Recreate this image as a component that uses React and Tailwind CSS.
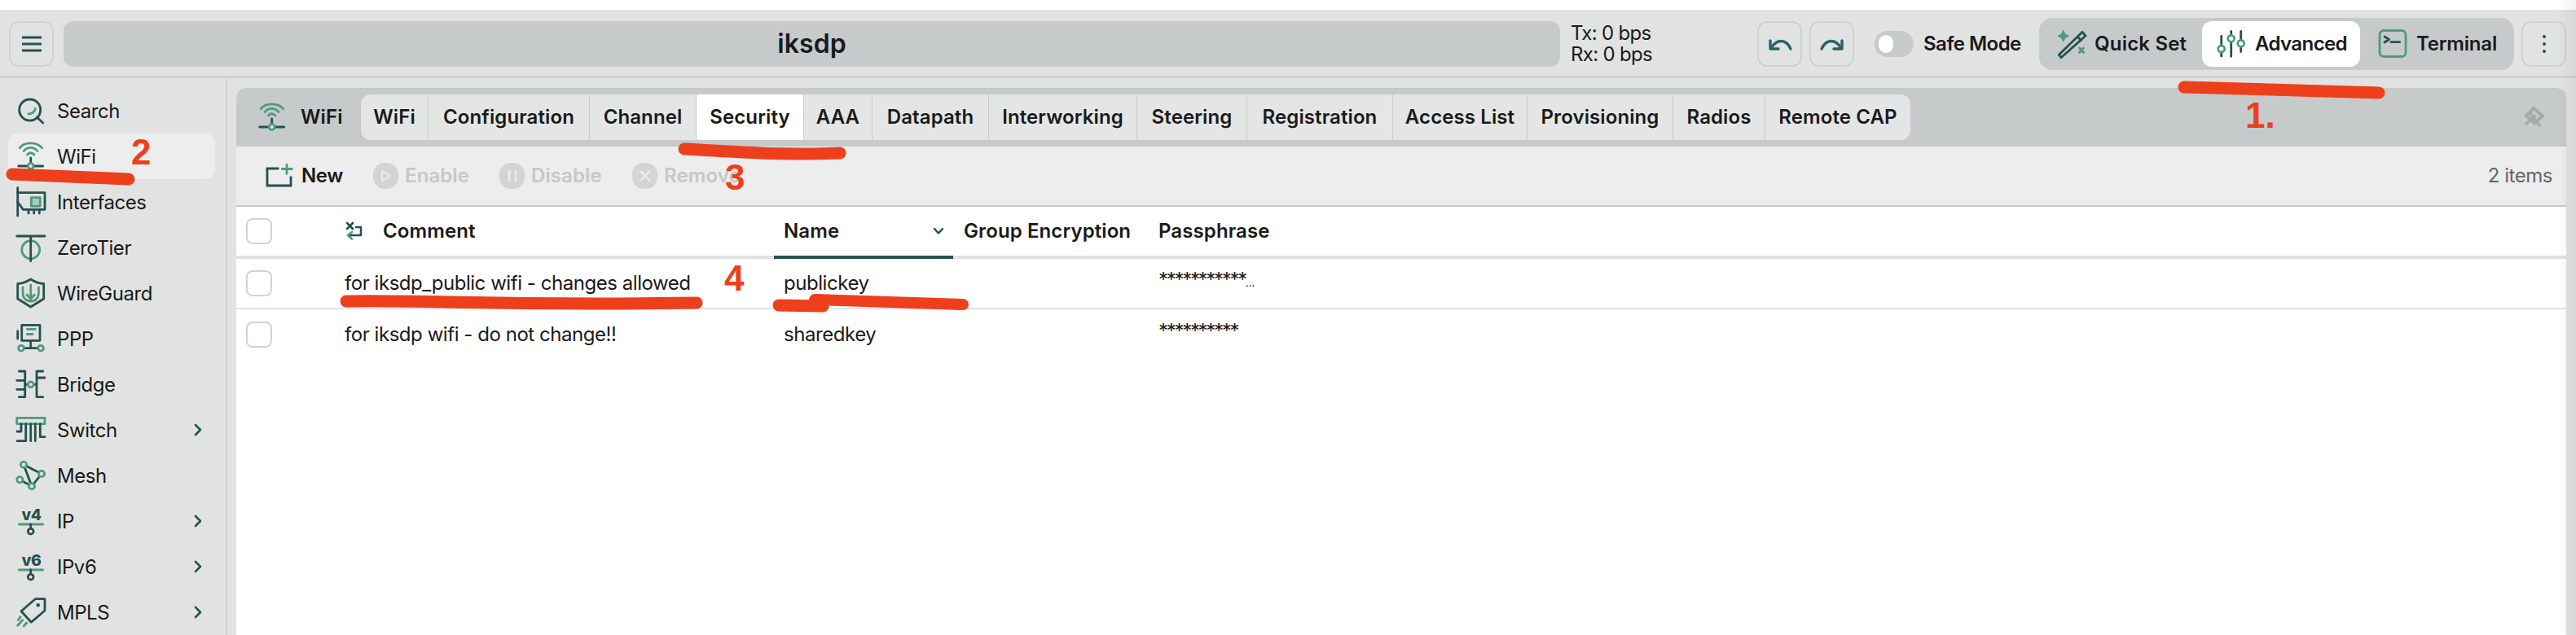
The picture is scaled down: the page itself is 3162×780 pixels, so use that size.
import React from "react";

const D = "#27504f";
const G = "#4f9a7e";

function Svg({ size = 40, w, h, children, className = "" }) {
  return (
    <svg width={w || size} height={h || size} viewBox={`0 0 ${w || size} ${h || size}`} fill="none" strokeWidth="2.8" strokeLinecap="round" strokeLinejoin="round" className={`shrink-0 ${className}`}>
      {children}
    </svg>
  );
}

const SearchI = () => (
  <Svg>
    <circle cx="18.7" cy="19" r="13" stroke={D} />
    <path d="M27.5 28 L34.7 35" stroke={D} />
    <path d="M17 24 C21 24 25 21 25.3 17.3" stroke={G} />
  </Svg>
);
const WifiI = () => (
  <Svg>
    <path d="M6.3 9.7 C12 2 27 2 33.7 9.7" stroke={G} />
    <path d="M11.3 13.5 C15 8 24 8 28 13.5" stroke={G} />
    <path d="M15.5 18 C17.5 15 21.5 15 24 18" stroke={G} />
    <path d="M19.7 22 V28.5" stroke={D} />
    <path d="M4.7 32 H34.7" stroke={D} />
    <circle cx="19.7" cy="32" r="3.4" fill="#e8eaea" stroke={G} />
  </Svg>
);
const InterfacesI = () => (
  <Svg>
    <path d="M3.7 2.7 V37" stroke={D} />
    <path d="M3.7 8.7 H37 V29.3 H10.3 L3.7 20" stroke={D} />
    <path d="M17 29.3 V34 M23.7 29.3 V34 M30.3 29.3 V34" stroke={D} />
    <rect x="20.3" y="14.7" width="11" height="10.6" stroke={G} fill="#a6cbbb" />
  </Svg>
);
const ZeroTierI = () => (
  <Svg>
    <circle cx="19.7" cy="22.7" r="11" stroke={G} />
    <path d="M2.7 6 H37 M19.7 6 V36.7" stroke={D} />
  </Svg>
);
const WireGuardI = () => (
  <Svg>
    <path d="M3.7 8.5 C8 8.5 13 7 19.7 3 C26 7 31 8.5 35.7 8.5 V27 L19.7 37 L3.7 27 Z" stroke={D} />
    <path d="M10 13 V20 C10 26 14 30 19.7 30 C25.4 30 29.4 26 29.4 20 V13" stroke={G} />
    <path d="M19.7 10 V29 M15 22 L19.7 27 L24.4 22" stroke={G} />
  </Svg>
);
const PPPI = () => (
  <Svg>
    <rect x="8.7" y="3.3" width="22.3" height="19" stroke={D} />
    <path d="M15.3 8.3 H25.3 M15.3 14.5 H22" stroke={G} />
    <path d="M3.7 10.7 V20" stroke={D} />
    <path d="M19.7 22.3 V31.7 M12 31.7 H27" stroke={D} />
    <circle cx="8" cy="31.7" r="3.4" stroke={G} />
    <circle cx="32" cy="31.7" r="3.4" stroke={G} />
  </Svg>
);
const BridgeI = () => (
  <Svg>
    <path d="M5.3 4 H12.7 V35.7 H5.3 M2.7 15.3 H12.7 M2.7 26.3 H12.7 M12.7 20.3 H16" stroke={D} />
    <path d="M34.7 4 H27 V35.7 H34.7 M27 12 H37 M23.5 20.3 H27" stroke={D} />
    <circle cx="19.7" cy="20.3" r="3.4" stroke={G} />
  </Svg>
);
const SwitchI = () => (
  <Svg>
    <rect x="2.7" y="5.3" width="34.3" height="7.4" stroke={G} />
    <path d="M3 22 H8 V12.7 M3 33.7 H13.7 V12.7 M19.7 12.7 V33.7 M25.3 12.7 V33.7 M31.3 12.7 V28.7 H37" stroke={D} />
  </Svg>
);
const MeshI = () => (
  <Svg>
    <path d="M11 6.7 L33 18 L21 33.3 Z M6.3 25.3 L21 33.3" stroke={D} />
    <circle cx="11" cy="6.7" r="3.6" fill="#e1e3e2" stroke={G} />
    <circle cx="33" cy="18" r="3.6" fill="#e1e3e2" stroke={G} />
    <circle cx="6.3" cy="25.3" r="3.6" fill="#e1e3e2" stroke={G} />
    <circle cx="21" cy="33.3" r="3.6" fill="#e1e3e2" stroke={G} />
  </Svg>
);
const IpI = ({ label }) => (
  <Svg>
    <text x="8.5" y="19" fill={D} fontFamily="Inter, sans-serif" fontWeight="800" fontSize="19" textLength="24" lengthAdjust="spacingAndGlyphs" stroke="none">{label}</text>
    <path d="M5.3 24 H34.7" stroke={G} />
    <path d="M19.7 24 V29" stroke={D} />
    <circle cx="19.7" cy="32.7" r="3.4" stroke={D} />
  </Svg>
);
const MplsI = () => (
  <Svg>
    <path d="M25.3 3.7 H37 V18 L20.3 32.3 L8 18.7 Z" stroke={D} />
    <circle cx="28.7" cy="11.3" r="2.2" fill={D} stroke="none" />
    <path d="M4.3 29.7 L7 25.7 M3.7 36.3 L9.7 29.7 M11.3 37 L14.7 33" stroke={G} />
  </Svg>
);
const QuickI = () => (
  <Svg>
    <path d="M3.3 33.3 L6 36.7 L36 10 L32 5.3 Z M26 11 L30.5 15.5" stroke={D} />
    <path d="M8.7 3.5 L11 8 L15.5 10 L11 12.5 L8.7 17 L6.3 12.5 L2 10 L6.3 8 Z" fill={G} stroke={G} strokeWidth="1" />
    <path d="M28.5 25 L33.5 30.5 M33.5 25 L28.5 30.5" stroke={G} />
  </Svg>
);
const AdvancedI = () => (
  <Svg>
    <path d="M8.7 10.5 V22 M8.7 30 V35 M20.7 4.5 V9.5 M20.7 17.5 V35.3 M32.7 4.5 V15.5 M32.7 23.5 V29.5" stroke={D} />
    <circle cx="8.7" cy="26" r="4" stroke={G} />
    <circle cx="20.7" cy="13.3" r="4" stroke={G} />
    <circle cx="32.7" cy="19.3" r="4" stroke={G} />
  </Svg>
);
const TerminalI = () => (
  <Svg>
    <rect x="4" y="3.5" width="32" height="32" rx="5" stroke={G} />
    <path d="M10 11 L15.5 14.5 L10 18 M18 17.7 H28.7" stroke={D} />
  </Svg>
);
const UndoI = ({ flip }) => (
  <svg width="40" height="40" viewBox="0 0 40 40" fill="none" stroke="#2b6065" strokeWidth="3.4" strokeLinecap="round" strokeLinejoin="round" className={flip ? "shrink-0 -scale-x-100" : "shrink-0"}>
    <path d="M8 16 V26 H18" />
    <path d="M9 25 C16 14 27 13 33 26" />
  </svg>
);
const NewI = () => (
  <svg width="36" height="30" viewBox="0 0 36 30" fill="none" stroke={D} strokeWidth="2.8" strokeLinecap="square" className="shrink-0">
    <path d="M15 6 H2 V27 H31 V17" />
    <path d="M26 1.5 V12 M20.5 6.5 H32" stroke={G} />
  </svg>
);
const CommentI = () => (
  <svg width="22" height="24" viewBox="0 0 22 24" fill="none" stroke={D} strokeWidth="2.6" strokeLinecap="round" strokeLinejoin="round" className="shrink-0">
    <path d="M2 2 L9 9 M9 2 L2 9" stroke={D} />
    <path d="M13 7 H19 V17 H4" />
    <path d="M8 13 L3 17 L8 21.5" stroke={G} />
  </svg>
);
const PinI = () => (
  <svg width="26" height="26" viewBox="0 0 26 26" fill="none" stroke="#a6aaaa" strokeWidth="4" strokeLinecap="square" className="shrink-0">
    <path d="M12 3 L23 12.5 L13 21 L3 12 Z" />
    <path d="M3 22 L13 13 M8 9 L19 24" strokeWidth="3.4" />
  </svg>
);
const Chevron = () => (
  <svg width="10" height="16" viewBox="0 0 10 16" fill="none" stroke={D} strokeWidth="2.6" strokeLinecap="round" strokeLinejoin="round" className="ml-auto mr-[16px] shrink-0">
    <path d="M2 2 L8 8 L2 14" />
  </svg>
);

const nav = [
  ["Search", <SearchI />],
  ["WiFi", <WifiI />, false, true],
  ["Interfaces", <InterfacesI />],
  ["ZeroTier", <ZeroTierI />],
  ["WireGuard", <WireGuardI />],
  ["PPP", <PPPI />],
  ["Bridge", <BridgeI />],
  ["Switch", <SwitchI />, true],
  ["Mesh", <MeshI />],
  ["IP", <IpI label="v4" />, true],
  ["IPv6", <IpI label="v6" />, true],
  ["MPLS", <MplsI />, true],
];

const tabs = [
  ["WiFi", "w-[82px] rounded-l-xl"],
  ["Configuration", "w-[197px]"],
  ["Channel", "w-[130px]"],
  ["Security", "w-[131px] !bg-white"],
  ["AAA", "w-[83px]"],
  ["Datapath", "w-[142px]"],
  ["Interworking", "w-[181px]"],
  ["Steering", "w-[134px]"],
  ["Registration", "w-[178px]"],
  ["Access List", "w-[164px]"],
  ["Provisioning", "w-[178px]"],
  ["Radios", "w-[112px]"],
  ["Remote CAP", "w-[178px] rounded-r-xl"],
];

const Check = () => <div className="w-8 h-8 rounded-lg border-2 border-[#d2d4d4] bg-white shrink-0" />;

function Tool({ label, children, className = "" }) {
  return (
    <div className={`flex items-center text-[#c6c8c8] font-semibold tracking-[0.1px] shrink-0 ${className}`}>
      <div className="w-[31px] h-8 rounded-[14px] bg-[#d3d5d5] flex items-center justify-center mr-[8px]">{children}</div>
      {label}
    </div>
  );
}

function Row({ comment, name, pass, last }) {
  return (
    <div className={`flex items-center pl-3 ${last ? "h-[62px]" : "h-[60px]"}`}>
      <Check />
      <div className="w-[89px] shrink-0" />
      <div className="w-[539px] shrink-0">{comment}</div>
      <div className="w-[460px] shrink-0">{name}</div>
      <div className="-translate-y-1">{pass}</div>
    </div>
  );
}

export default function App() {
  return (
    <div className="relative h-[780px] w-[3162px] overflow-hidden bg-white font-[Inter,sans-serif] text-[24px] text-[#1a1a1a] tracking-[-0.45px]">
      <div className="h-3 bg-white" />
      <header className="flex items-center h-[84px] pt-[3px] pl-[11px] pr-3 bg-[#e1e3e2] border-b-[3px] border-[#cfd2d2]">
        <div className="w-[55px] h-14 rounded-xl border-2 border-[#cfd2d2] flex items-center justify-center shrink-0">
          <svg width="24" height="20" viewBox="0 0 24 20" stroke={D} strokeWidth="3"><path d="M0 2 H24 M0 10 H24 M0 18 H24" /></svg>
        </div>
        <div className="ml-3 flex-1 h-14 rounded-xl bg-[#c6cacb] flex items-center justify-center font-semibold text-[32px] tracking-[0.1px]">iksdp</div>
        <div className="ml-[13px] w-[229px] shrink-0 leading-[26px] tracking-[-0.7px]">
          <div>Tx: 0 bps</div>
          <div>Rx: 0 bps</div>
        </div>
        <div className="w-[55px] h-14 rounded-xl border-2 border-[#cfd2d2] flex items-center justify-center shrink-0"><UndoI /></div>
        <div className="ml-[9px] w-[55px] h-14 rounded-xl border-2 border-[#cfd2d2] flex items-center justify-center shrink-0"><UndoI flip /></div>
        <div className="ml-[25px] w-12 h-8 rounded-full bg-[#c6cacb] flex items-center pl-[5px] shrink-0"><div className="w-[18px] h-[22px] rounded-full bg-white" /></div>
        <div className="ml-3 w-[121px] font-semibold whitespace-nowrap tracking-[-0.5px]">Safe Mode</div>
        <div className="ml-[21px] w-[583px] h-16 rounded-2xl bg-[#c6cacb] flex items-center font-semibold shrink-0">
          <div className="w-[200px] pl-[21px] flex items-center gap-[7px] tracking-[0.2px]"><QuickI />Quick Set</div>
          <div className="w-[194px] h-14 rounded-xl bg-white pl-[15px] flex items-center gap-[10px] tracking-[-0.6px]"><AdvancedI />Advanced</div>
          <div className="pl-[20px] flex items-center gap-[9px] tracking-[-0.2px]"><TerminalI />Terminal</div>
        </div>
        <div className="ml-[9px] w-[55px] h-14 rounded-xl border-2 border-[#cfd2d2] flex flex-col items-center justify-center gap-[5px] shrink-0">
          <div className="w-1 h-1 rounded-full bg-[#27504f]" />
          <div className="w-1 h-1 rounded-full bg-[#27504f]" />
          <div className="w-1 h-1 rounded-full bg-[#27504f]" />
        </div>
      </header>

      <div className="flex h-[684px] bg-[#e1e3e2]">
        <aside className="w-[279px] shrink-0 border-r-2 border-[#cfd2d2] pt-3 pl-[10px] pr-[13px]">
          {nav.map(([label, icon, chev, active]) => (
            <div key={label} className={`h-14 flex items-center gap-3 pl-2 rounded-xl ${active ? "bg-[#ededed]" : ""}`}>
              {icon}
              <span className="pt-[2px]">{label}</span>
              {chev && <Chevron />}
            </div>
          ))}
        </aside>

        <main className="flex-1 pl-[11px] pr-3 pt-3 min-w-0">
          <div className="h-full bg-white rounded-t-xl overflow-hidden">
            <div className="h-[72px] bg-[#c6cacb] flex items-center pr-[26px] font-semibold tracking-[0.1px]">
              <div className="w-[153px] pl-[24px] flex items-center gap-[15px] shrink-0"><WifiI />WiFi</div>
              <div className="flex h-14 gap-[1px] bg-[#c9cccc] rounded-xl">
                {tabs.map(([t, c]) => (
                  <div key={t} className={`h-14 flex items-center justify-center bg-[#e4e6e5] whitespace-nowrap ${c}`}>{t}</div>
                ))}
              </div>
              <div className="ml-auto -translate-y-[1px]"><PinI /></div>
            </div>
            <div className="h-[74px] bg-[#ededed] border-b-2 border-[#c6cacb] flex items-center pl-[36px] pr-[17px]">
              <div className="w-[132px] shrink-0 flex items-center gap-[8px] font-semibold"><NewI />New</div>
              <Tool label="Enable" className="w-[155px]">
                <svg width="14" height="16" viewBox="0 0 14 16" fill="none" stroke="#e9eaea" strokeWidth="2.4" strokeLinejoin="round"><path d="M2 2 L12 8 L2 14 Z" /></svg>
              </Tool>
              <Tool label="Disable" className="w-[163px]">
                <svg width="14" height="16" viewBox="0 0 14 16" stroke="#e9eaea" strokeWidth="3"><path d="M3 1 V15 M11 1 V15" /></svg>
              </Tool>
              <Tool label="Remove">
                <svg width="16" height="16" viewBox="0 0 16 16" stroke="#e9eaea" strokeWidth="2.6"><path d="M2 2 L14 14 M14 2 L2 14" /></svg>
              </Tool>
              <div className="ml-auto text-[#5f6868]">2 items</div>
            </div>
            <div className="flex items-center h-[64px] border-b-4 border-[#e1e3e2] pl-3 font-semibold tracking-[0.1px]">
              <Check />
              <div className="w-[90px] shrink-0" />
              <div className="w-[526px] shrink-0 flex items-center gap-[24px]"><CommentI />Comment</div>
              <div className="w-[220px] shrink-0 flex items-center justify-between pl-[12px] pr-[12px] h-[64px] -mb-1 border-b-4 border-[#27504f]">
                Name
                <svg width="12" height="8" viewBox="0 0 12 8" fill="none" stroke={D} strokeWidth="2.4" strokeLinecap="round" strokeLinejoin="round"><path d="M1 1 L6 6.5 L11 1" /></svg>
              </div>
              <div className="w-[252px] shrink-0 pl-[13px] whitespace-nowrap">Group Encryption</div>
              <div>Passphrase</div>
            </div>
            <div className="border-b-2 border-[#e1e3e2]">
              <Row comment="for iksdp_public wifi - changes allowed" name="publickey" pass={<span className="tracking-[-2.3px]">***********<span className="text-[13px] tracking-normal">...</span></span>} />
            </div>
            <Row last comment="for iksdp wifi - do not change!!" name="sharedkey" pass={<span className="tracking-[-2.3px]">**********</span>} />
          </div>
        </main>
      </div>

      {/* hand-drawn annotations over the screenshot */}
      <svg className="absolute inset-0 pointer-events-none" width="3162" height="780" fill="none" stroke="#ee3f1c" strokeLinecap="round" strokeLinejoin="round">
        <path d="M2681 107 L2920 114" strokeWidth="15" />
        <path d="M15 214 L158 220" strokeWidth="15" />
        <path d="M840 183 C900 186 950 191 1031 188" strokeWidth="15" />
        <path d="M425 370 C520 368 620 376 855 372" strokeWidth="15" />
        <path d="M956 375 L1010 376" strokeWidth="15" />
        <path d="M1000 368 L1182 374" strokeWidth="14" />
      </svg>
      <div className="absolute left-[161px] top-[165px] font-['Liberation_Sans',sans-serif] font-bold text-[44px] leading-[44px] text-[#ee3f1c] tracking-normal">2</div>
      <div className="absolute left-[890px] top-[196px] font-['Liberation_Sans',sans-serif] font-bold text-[44px] leading-[44px] text-[#ee3f1c] tracking-normal">3</div>
      <div className="absolute left-[889px] top-[320px] font-['Liberation_Sans',sans-serif] font-bold text-[44px] leading-[44px] text-[#ee3f1c] tracking-normal">4</div>
      <div className="absolute left-[2756px] top-[120px] font-['Liberation_Sans',sans-serif] font-bold text-[44px] leading-[44px] text-[#ee3f1c] tracking-normal">1.</div>
      <div className="absolute right-0 top-0 h-full w-[24px] bg-gradient-to-r from-transparent to-black/5 pointer-events-none" />
    </div>
  );
}
